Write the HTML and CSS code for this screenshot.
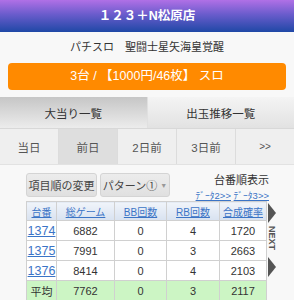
FILE: index.html
```html
<!DOCTYPE html>
<html lang="ja">
<head>
  <meta charset="UTF-8" />
  <meta name="viewport" content="width=device-width, initial-scale=1.0"/>
  <title>123+N松原店</title>
  <link rel="stylesheet" href="styles.css">
</head>
<body>
  <div class="page">
    <div class="shop-header">１２３＋N松原店</div>
    <div class="machine-name">パチスロ　聖闘士星矢海皇覚醒</div>
    <div class="rate-bar">3台 / 【1000円/46枚】 スロ</div>

    <div class="main-tabs">
      <div class="main-tab active">大当り一覧</div>
      <div class="main-tab">出玉推移一覧</div>
    </div>

    <div class="day-tabs">
      <div class="day-tab">当日</div>
      <div class="day-tab active">前日</div>
      <div class="day-tab">2日前</div>
      <div class="day-tab">3日前</div>
      <div class="day-tab">&gt;&gt;</div>
    </div>

    <div class="tools">
      <button class="tool-btn order-btn">項目順の変更</button>
      <button class="tool-btn pattern-btn">パターン① <span class="caret">▼</span></button>
      <div class="sort-info">
        <div class="sort-label">台番順表示</div>
        <div class="data-links"><a href="#">ﾃﾞｰﾀ2&gt;&gt;</a> <a href="#">ﾃﾞｰﾀ3&gt;&gt;</a></div>
      </div>
    </div>

    <div class="table-wrap">
      <table class="data-table">
        <thead>
          <tr>
            <th><a href="#">台番</a></th>
            <th><a href="#">総ゲーム</a></th>
            <th><a href="#">BB回数</a></th>
            <th><a href="#">RB回数</a></th>
            <th><a href="#">合成確率</a></th>
          </tr>
        </thead>
        <tbody>
          <tr><td><a class="unit" href="#">1374</a></td><td>6882</td><td>0</td><td>4</td><td>1720</td></tr>
          <tr><td><a class="unit" href="#">1375</a></td><td>7991</td><td>0</td><td>3</td><td>2663</td></tr>
          <tr><td><a class="unit" href="#">1376</a></td><td>8414</td><td>0</td><td>4</td><td>2103</td></tr>
          <tr class="avg"><td>平均</td><td>7762</td><td>0</td><td>3</td><td>2117</td></tr>
        </tbody>
      </table>
      <div class="next-tab">
        <span class="arrow"></span>
        <span class="next-text">NEXT</span>
        <span class="arrow"></span>
      </div>
    </div>
  </div>
</body>
</html>
```

FILE: styles.css
```css
body {
  margin: 0;
  padding: 0;
  background-color: #f8f8f8;
  font-family: "Liberation Sans", "Noto Sans CJK JP", sans-serif;
  color: #333;
}

.page {
  width: 294px;
  height: 300px;
  overflow: hidden;
}

.shop-header {
  height: 32px;
  line-height: 33px;
  text-align: center;
  color: #fff;
  font-size: 12.5px;
  font-weight: bold;
  background: linear-gradient(to bottom, #b070e6 0%, #6a5ccc 45%, #1f48a6 100%);
}

.machine-name {
  height: 31px;
  line-height: 31px;
  text-align: center;
  font-size: 11px;
  color: #333;
}

.rate-bar {
  margin: 0 8px;
  height: 27px;
  line-height: 27px;
  border-radius: 4px;
  background-color: #ff8a00;
  color: #fff;
  text-align: center;
  font-size: 12.5px;
}

.main-tabs {
  display: flex;
  margin-top: 7px;
  height: 31px;
  border-bottom: 1px solid #d8d8d8;
}

.main-tab {
  flex: 1;
  display: flex;
  align-items: center;
  justify-content: center;
  font-size: 11.5px;
  color: #333;
  background: linear-gradient(to bottom, #f4f4f4, #e2e2e2);
}

.main-tab.active {
  background: linear-gradient(to bottom, #c6c6c6, #ececec);
  border-right: 1px solid #e0e0e0;
}

.day-tabs {
  display: flex;
  height: 35px;
  background-color: #efefef;
  border-bottom: 1px solid #e2e2e2;
}

.day-tab {
  flex: 1;
  display: flex;
  align-items: center;
  justify-content: center;
  font-size: 11.5px;
  color: #555;
  border-right: 1px solid #dcdcdc;
}

.day-tab:last-child {
  border-right: none;
  font-size: 10px;
}

.day-tab.active {
  background-color: #dedede;
}

.tools {
  display: flex;
  align-items: flex-start;
  gap: 3px;
  padding: 8px 26px 0 26px;
  height: 28px;
}

.tool-btn {
  flex-shrink: 0;
  white-space: nowrap;
  height: 24px;
  padding: 0;
  border: 1px solid #d4d4d4;
  border-radius: 3px;
  background: linear-gradient(to bottom, #ececec, #e0e0e0);
  font-family: "Liberation Sans", "Noto Sans CJK JP", sans-serif;
  font-size: 11px;
  color: #444;
}

.order-btn {
  width: 71px;
}

.pattern-btn {
  width: 70px;
}

.caret {
  font-size: 7px;
  color: #999;
  vertical-align: 2px;
}

.sort-info {
  margin-left: auto;
  margin-right: -1px;
  text-align: right;
  white-space: nowrap;
}

.sort-label {
  font-size: 11px;
  color: #333;
  line-height: 15px;
}

.data-links {
  font-size: 9.5px;
  line-height: 13px;
  margin-top: 1px;
}

.data-links a {
  color: #3b74c6;
}

.table-wrap {
  display: flex;
  align-items: flex-start;
  padding-left: 26px;
}

.data-table {
  border-collapse: collapse;
  width: 241px;
  background-color: #fff;
  table-layout: fixed;
}

.data-table th,
.data-table td {
  border: 1px solid #d0d0d0;
  text-align: center;
  height: 19px;
  padding: 0;
  font-size: 11px;
  white-space: nowrap;
  overflow: hidden;
}

.data-table th {
  height: 18px;
  background: linear-gradient(to bottom, #f0f4fa, #d8e2f0);
  font-weight: normal;
  font-size: 10px;
}

.data-table th a {
  color: #3b74c6;
}

.data-table th:nth-child(1) { width: 29px; }
.data-table th:nth-child(2) { width: 57px; }
.data-table th:nth-child(3) { width: 51px; }
.data-table th:nth-child(4) { width: 52px; }

.data-table a.unit {
  color: #3b74c6;
  font-size: 12.5px;
}

.data-table tr.avg td {
  background-color: #ccf5c4;
}

.next-tab {
  width: 9px;
  display: flex;
  flex-direction: column;
  align-items: center;
  padding-top: 2px;
}

.arrow {
  width: 0;
  height: 0;
  border-top: 10px solid transparent;
  border-bottom: 10px solid transparent;
  border-left: 8px solid #555;
}

.next-text {
  writing-mode: vertical-rl;
  font-size: 9px;
  font-weight: bold;
  color: #555;
  margin: 3px 0 5px;
  height: 26px;
}
```
